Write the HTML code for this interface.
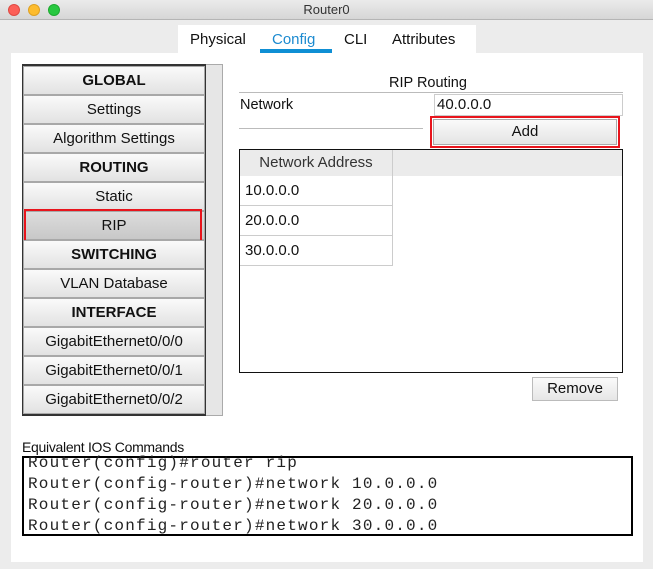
<!DOCTYPE html>
<html><head><style>
*{margin:0;padding:0;box-sizing:border-box}
body{width:653px;height:569px;background:#ececec;font-family:"Liberation Sans",sans-serif;font-size:15px;color:#111;position:relative;overflow:hidden}
.a{position:absolute}
.title{left:0;top:0;width:653px;height:20px;background:linear-gradient(#ebebeb,#d6d6d6);border-bottom:1px solid #b5b5b5;text-align:center;font-size:13px;line-height:20px;color:#333}
.dot{top:4px;width:12px;height:12px;border-radius:50%}
.row{position:absolute;left:23px;width:182px;height:29px;border:1px solid #a8a8a8;background:linear-gradient(#fafafa,#e2e2e2);text-align:center;line-height:28px;font-size:15px}
.b{font-weight:bold}
.cell{position:absolute;left:240px;width:153px;height:30px;border-bottom:1px solid #ccc;border-right:1px solid #ccc;padding-left:5px;line-height:29px;background:#fff}
.mono{font-family:"Liberation Mono",monospace;font-size:16px;position:absolute;left:4px;letter-spacing:1.2px;color:#222;white-space:pre}
</style></head><body>
<div class="a title">Router0</div>
<div class="a dot" style="left:8px;background:#fc5f57;border:1px solid #de4a43"></div>
<div class="a dot" style="left:28px;background:#fdbc2e;border:1px solid #dea123"></div>
<div class="a dot" style="left:48px;background:#28c840;border:1px solid #1eaa30"></div>
<div class="a" style="left:178px;top:25px;width:298px;height:30px;background:#fff"></div>
<div class="a" style="left:190px;top:31px">Physical</div>
<div class="a" style="left:272px;top:31px;color:#1b8ad0">Config</div>
<div class="a" style="left:260px;top:49px;width:72px;height:4px;background:#0f8fd4"></div>
<div class="a" style="left:344px;top:31px">CLI</div>
<div class="a" style="left:392px;top:31px">Attributes</div>
<div class="a" style="left:11px;top:53px;width:632px;height:509px;background:#fff"></div>
<div class="a" style="left:22px;top:64px;width:201px;height:352px;border:1px solid #aaa;background:#e6e6e6"></div>
<div class="a" style="left:22px;top:64px;width:184px;height:352px;border:2px solid #333;background:#fff"></div>
<div class="row b" style="top:66px">GLOBAL</div>
<div class="row" style="top:95px">Settings</div>
<div class="row" style="top:124px">Algorithm Settings</div>
<div class="row b" style="top:153px">ROUTING</div>
<div class="row" style="top:182px">Static</div>
<div class="row" style="top:211px;background:linear-gradient(#dcdcdc,#c8c8c8)">RIP</div>
<div class="a" style="left:24px;top:209px;width:178px;height:33px;border:2px solid #e8141c"></div>
<div class="row b" style="top:240px">SWITCHING</div>
<div class="row" style="top:269px">VLAN Database</div>
<div class="row b" style="top:298px">INTERFACE</div>
<div class="row" style="top:327px">GigabitEthernet0/0/0</div>
<div class="row" style="top:356px">GigabitEthernet0/0/1</div>
<div class="row" style="top:385px">GigabitEthernet0/0/2</div>
<div class="a" style="left:389px;top:75px;font-size:14.5px">RIP Routing</div>
<div class="a" style="left:239px;top:92px;width:384px;height:1px;background:#bbb"></div>
<div class="a" style="left:240px;top:97px;font-size:14.5px">Network</div>
<div class="a" style="left:434px;top:94px;width:189px;height:22px;border:1px solid #ccc;padding-left:2px;line-height:20px">40.0.0.0</div>
<div class="a" style="left:239px;top:128px;width:184px;height:1px;background:#bbb"></div>
<div class="a" style="left:430px;top:116px;width:190px;height:32px;border:2px solid #e8141c"></div>
<div class="a" style="left:433px;top:119px;width:184px;height:26px;border:1px solid #aaa;background:linear-gradient(#fafafa,#e4e4e4);text-align:center;line-height:24px">Add</div>
<div class="a" style="left:239px;top:149px;width:384px;height:224px;border:1px solid #111;background:#fff"></div>
<div class="a" style="left:240px;top:150px;width:382px;height:26px;background:#ebebeb"></div>
<div class="a" style="left:240px;top:150px;width:153px;height:26px;border-right:1px solid #ccc;text-align:center;line-height:25px;color:#333">Network Address</div>
<div class="cell" style="top:176px">10.0.0.0</div>
<div class="cell" style="top:206px">20.0.0.0</div>
<div class="cell" style="top:236px">30.0.0.0</div>
<div class="a" style="left:532px;top:377px;width:86px;height:24px;border:1px solid #bbb;background:linear-gradient(#fafafa,#e6e6e6);text-align:center;line-height:22px">Remove</div>
<div class="a" style="left:22px;top:439px;font-size:14px;letter-spacing:-0.3px">Equivalent IOS Commands</div>
<div class="a" style="left:22px;top:456px;width:611px;height:80px;border:2px solid #000;background:#fff">
<div class="mono" style="top:-4px">Router(config)#router rip</div>
<div class="mono" style="top:17px">Router(config-router)#network 10.0.0.0</div>
<div class="mono" style="top:38px">Router(config-router)#network 20.0.0.0</div>
<div class="mono" style="top:59px">Router(config-router)#network 30.0.0.0</div>
</div>
</body></html>
